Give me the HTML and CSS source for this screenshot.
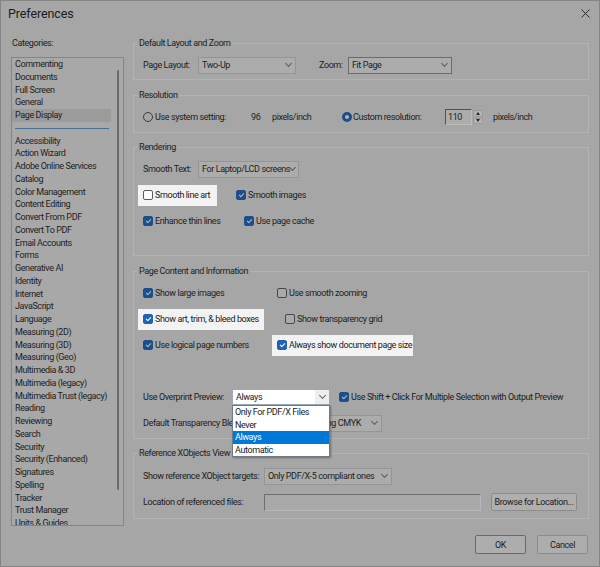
FILE: index.html
```html
<!DOCTYPE html>
<html>
<head>
<meta charset="utf-8">
<link rel="stylesheet" href="styles.css">
</head>
<body>
<div class="dialog">
  <div class="titlebar">
    <span class="title">Preferences</span>
    <svg class="close" viewBox="0 0 10 10"><path d="M0.5 0.5 L9.5 9.5 M9.5 0.5 L0.5 9.5" stroke="#202020" stroke-width="1" fill="none"/></svg>
  </div>
  <div class="main">
    <div class="side">
      <div class="cat-label">Categories:</div>
      <div class="list">
        <div class="list-items">
          <div class="item">Commenting</div>
          <div class="item">Documents</div>
          <div class="item">Full Screen</div>
          <div class="item">General</div>
          <div class="item sel">Page Display</div>
          <div class="sep"></div>
          <div class="item">Accessibility</div>
          <div class="item">Action Wizard</div>
          <div class="item">Adobe Online Services</div>
          <div class="item">Catalog</div>
          <div class="item">Color Management</div>
          <div class="item">Content Editing</div>
          <div class="item">Convert From PDF</div>
          <div class="item">Convert To PDF</div>
          <div class="item">Email Accounts</div>
          <div class="item">Forms</div>
          <div class="item">Generative AI</div>
          <div class="item">Identity</div>
          <div class="item">Internet</div>
          <div class="item">JavaScript</div>
          <div class="item">Language</div>
          <div class="item">Measuring (2D)</div>
          <div class="item">Measuring (3D)</div>
          <div class="item">Measuring (Geo)</div>
          <div class="item">Multimedia &amp; 3D</div>
          <div class="item">Multimedia (legacy)</div>
          <div class="item">Multimedia Trust (legacy)</div>
          <div class="item">Reading</div>
          <div class="item">Reviewing</div>
          <div class="item">Search</div>
          <div class="item">Security</div>
          <div class="item">Security (Enhanced)</div>
          <div class="item">Signatures</div>
          <div class="item">Spelling</div>
          <div class="item">Tracker</div>
          <div class="item">Trust Manager</div>
          <div class="item">Units &amp; Guides</div>
        </div>
        <div class="scrollbar"></div>
      </div>
    </div>

    <div class="content">
      <fieldset class="group g1">
        <legend>Default Layout and Zoom</legend>
        <div class="row">
          <span class="lbl w55">Page Layout:</span>
          <div class="select w98"><span>Two-Up</span><span class="chev"></span></div>
          <span class="lbl w29 ml23">Zoom:</span>
          <div class="select w104 focus"><span>Fit Page</span><span class="chev"></span></div>
        </div>
      </fieldset>

      <fieldset class="group g2">
        <legend>Resolution</legend>
        <div class="row">
          <span class="radio"></span>
          <span class="lbl w96 ml2">Use system setting:</span>
          <span class="lbl w21">96</span>
          <span class="lbl w70">pixels/inch</span>
          <span class="radio on"></span>
          <span class="lbl w92 ml1">Custom resolution:</span>
          <div class="numbox">110</div>
          <div class="spinner"><span class="up"></span><span class="down"></span></div>
          <span class="lbl ml10">pixels/inch</span>
        </div>
      </fieldset>

      <fieldset class="group g3">
        <legend>Rendering</legend>
        <div class="row">
          <span class="lbl w55">Smooth Text:</span>
          <div class="select w101"><span>For Laptop/LCD screens</span><span class="chev"></span></div>
        </div>
        <div class="row">
          <div class="hl w79"><span class="cb"></span><span>Smooth line art</span></div>
          <div class="opt ml19"><span class="cb on"></span><span>Smooth images</span></div>
        </div>
        <div class="row">
          <div class="opt w101"><span class="cb on"></span><span>Enhance thin lines</span></div>
          <div class="opt"><span class="cb on"></span><span>Use page cache</span></div>
        </div>
      </fieldset>

      <fieldset class="group g4">
        <legend>Page Content and Information</legend>
        <div class="row">
          <div class="opt w134"><span class="cb on"></span><span>Show large images</span></div>
          <div class="opt"><span class="cb"></span><span>Use smooth zooming</span></div>
        </div>
        <div class="row">
          <div class="hl w126"><span class="cb on"></span><span>Show art, trim, &amp; bleed boxes</span></div>
          <div class="opt ml21"><span class="cb"></span><span>Show transparency grid</span></div>
        </div>
        <div class="row">
          <div class="opt w129"><span class="cb on"></span><span>Use logical page numbers</span></div>
          <div class="hl hl-in w141"><span class="cb on"></span><span>Always show document page size</span></div>
        </div>
        <div class="row spacer"></div>
        <div class="row">
          <span class="lbl w89">Use Overprint Preview:</span>
          <div class="combo">
            <div class="select w98 light"><span>Always</span><span class="chevbox"><span class="chev"></span></span></div>
            <div class="dropdown">
              <div class="dd-item">Only For PDF/X Files</div>
              <div class="dd-item">Never</div>
              <div class="dd-item active">Always</div>
              <div class="dd-item">Automatic</div>
            </div>
          </div>
          <div class="opt ml9"><span class="cb on"></span><span>Use Shift + Click For Multiple Selection with Output Preview</span></div>
        </div>
        <div class="row">
          <span class="lbl w159">Default Transparency Blending Space:</span>
          <div class="select w80"><span>Working CMYK</span><span class="chev"></span></div>
        </div>
      </fieldset>

      <fieldset class="group g5">
        <legend>Reference XObjects View Mode</legend>
        <div class="row">
          <span class="lbl w121">Show reference XObject targets:</span>
          <div class="select w128"><span>Only PDF/X-5 compliant ones</span><span class="chev"></span></div>
        </div>
        <div class="row">
          <span class="lbl w121">Location of referenced files:</span>
          <div class="textbox"></div>
          <div class="btn browse">Browse for Location...</div>
        </div>
      </fieldset>
    </div>
  </div>
  <div class="footer">
    <div class="btn ok">OK</div>
    <div class="btn">Cancel</div>
  </div>
</div>
</body>
</html>
```

FILE: styles.css
```css
* { box-sizing: border-box; }
html, body { margin: 0; padding: 0; }
body {
  width: 600px;
  height: 567px;
  overflow: hidden;
  background: #a6a6a6;
  font-family: Roboto, "Liberation Sans", Arial, sans-serif;
  font-size: 9px;
  letter-spacing: -0.4px;
  color: #1d1d1d;
}
.dialog {
  width: 600px;
  height: 567px;
  border: 1px solid #858585;
  background: #a6a6a6;
  display: flex;
  flex-direction: column;
}
.titlebar {
  height: 24px;
  flex: 0 0 24px;
  display: flex;
  align-items: center;
  justify-content: space-between;
  padding: 0 9px 0 7px;
}
.title { font-size: 12.5px; letter-spacing: -0.1px; color: #1a1a1a; }
.close { width: 9px; height: 9px; }

.main {
  display: flex;
  gap: 9px;
  padding: 12px 10px 0 10px;
}
.side { width: 113px; flex: 0 0 113px; }
.cat-label { height: 12px; line-height: 12px; padding-left: 1px; }
.list {
  margin-top: 8px;
  height: 469px;
  border: 1px solid #858585;
  background: #a8a8a8;
  display: flex;
  overflow: hidden;
}
.list-items { width: 99px; flex: 0 0 99px; }
.item {
  height: 12.75px;
  line-height: 12.75px;
  padding-left: 3px;
  white-space: nowrap;
}
.item.sel { background: #9b9b9b; }
.sep {
  height: 12.75px;
  display: flex;
  align-items: center;
  padding: 0 2px 0 3px;
}
.sep::after { content: ""; flex: 1; height: 1px; background: #4a6f95; }
.scrollbar {
  width: 2px;
  height: 420px;
  margin: 12px 0 0 6px;
  background: #6a6a6a;
  border-radius: 1px;
}

.content { width: 456px; display: flex; flex-direction: column; }
.group {
  margin: 0;
  border: 1px solid #b3b3b3;
  padding: 3px 8px 1px 9px;
  min-width: 0;
}
.group legend {
  height: 12px;
  line-height: 12px;
  padding: 0 2px;
  margin-left: -6px;
}
.g2 { margin-top: 9px; padding-bottom: 2px; }
.g3 { margin-top: 8px; padding-bottom: 21px; }
.g4 { margin-top: 9px; padding-bottom: 2px; }
.g5 { margin-top: 8px; padding-top: 4px; padding-bottom: 3px; }

.row { display: flex; align-items: center; height: 26px; white-space: nowrap; }
.lbl { flex: 0 0 auto; }
.w21 { width: 21px; } .w29 { width: 29px; } .w55 { width: 55px; } .w70 { width: 70px; }
.w79 { width: 79px; } .w80 { width: 80px; } .w89 { width: 89px; } .w92 { width: 92px; }
.w96 { width: 96px; } .w98 { width: 98px; } .w101 { width: 101px; } .w104 { width: 104px; }
.w121 { width: 121px; } .w126 { width: 126px; } .w128 { width: 128px; } .w129 { width: 129px; }
.w134 { width: 134px; } .w141 { width: 141px; } .w159 { width: 159px; }
.ml1 { margin-left: 1px; } .ml2 { margin-left: 2px; } .ml9 { margin-left: 9px; } .ml10 { margin-left: 10px; }
.ml19 { margin-left: 19px; } .ml21 { margin-left: 21px; } .ml23 { margin-left: 23px; }

.select {
  flex: 0 0 auto;
  height: 17px;
  border: 1px solid #959595;
  background: #acacac;
  display: flex;
  align-items: center;
  justify-content: space-between;
  padding: 0 3px 0 3px;
  overflow: hidden;
}
.select.focus { border-color: #6c6c6c; }
.chev {
  width: 5px;
  height: 5px;
  border-right: 1px solid #5a5a5a;
  border-bottom: 1px solid #5a5a5a;
  transform: rotate(45deg);
  margin: -3px 1px 0 0;
  flex: 0 0 auto;
}
.select.light {
  background: #ffffff;
  border-color: #98aabb;
  height: 16px;
  padding-right: 0;
  color: #1a1a1a;
}
.chevbox {
  width: 14px;
  height: 14px;
  background: #eeeeee;
  display: flex;
  align-items: center;
  justify-content: center;
}
.chevbox .chev { border-color: #666; margin: -3px 0 0 0; }

.combo { position: relative; flex: 0 0 auto; }
.dropdown {
  position: absolute;
  top: 16px;
  left: 0;
  width: 98px;
  background: #ffffff;
  border: 1px solid #6f7a86;
  box-shadow: 1px 1px 2px rgba(0, 0, 0, 0.35);
  z-index: 2;
  color: #1a1a1a;
}
.dd-item {
  height: 12.6px;
  line-height: 12.6px;
  padding-left: 2px;
  white-space: nowrap;
}
.dd-item.active { background: #0078d7; color: #ffffff; }

.radio {
  flex: 0 0 auto;
  width: 10px;
  height: 10px;
  border-radius: 50%;
  border: 1px solid #3c3c3c;
}
.radio.on { border: 3px solid #1b4d86; background: #b4b4b4; }

.numbox {
  width: 27px;
  height: 16px;
  line-height: 14px;
  padding-left: 2px;
  background: #acacac;
  border-top: 1px solid #505050;
  border-left: 1px solid #505050;
  border-right: 1px solid #bcbcbc;
  border-bottom: 1px solid #bcbcbc;
}
.spinner {
  width: 10px;
  height: 14px;
  margin-left: 1px;
  display: flex;
  flex-direction: column;
  gap: 1px;
}
.spinner span {
  flex: 1;
  background: #b3b3b3;
  border: 1px solid #9a9a9a;
  display: flex;
  align-items: center;
  justify-content: center;
}
.spinner .up::after {
  content: "";
  border-left: 2.5px solid transparent;
  border-right: 2.5px solid transparent;
  border-bottom: 3px solid #2a2a2a;
}
.spinner .down::after {
  content: "";
  border-left: 2.5px solid transparent;
  border-right: 2.5px solid transparent;
  border-top: 3px solid #2a2a2a;
}

.opt { display: flex; align-items: center; gap: 2px; flex: 0 0 auto; }
.hl {
  display: flex;
  align-items: center;
  gap: 2px;
  height: 21px;
  margin-left: -5px;
  padding-left: 5px;
  background: #f3f3f3;
  color: #1a1a1a;
  flex: 0 0 auto;
}
.hl-in { margin-left: 0; }
.cb {
  position: relative;
  flex: 0 0 auto;
  width: 10px;
  height: 10px;
  border-radius: 2px;
  border: 1px solid #474747;
  background: #aaaaaa;
}
.cb.on { background: #1d4e87; border-color: #1d4e87; }
.cb.on::after {
  content: "";
  position: absolute;
  left: 3px;
  top: 1px;
  width: 2px;
  height: 4px;
  border-right: 1px solid #a8bbd0;
  border-bottom: 1px solid #a8bbd0;
  transform: rotate(45deg);
}
.hl .cb { background: #ffffff; border-color: #5c5c5c; }
.hl .cb.on { background: #1f64b4; border-color: #1f64b4; }
.hl .cb.on::after { border-color: #ffffff; }

.textbox {
  width: 217px;
  height: 17px;
  background: #a9a9a9;
  border-top: 1px solid #6e6e6e;
  border-left: 1px solid #6e6e6e;
  border-right: 1px solid #b8b8b8;
  border-bottom: 1px solid #b8b8b8;
}
.btn {
  height: 19px;
  width: 51px;
  border: 1px solid #8c8c8c;
  border-radius: 2px;
  background: #adadad;
  display: flex;
  align-items: center;
  justify-content: center;
  white-space: nowrap;
}
.browse { width: 86px; height: 18px; margin-left: 10px; background: #afafaf; }
.ok { border-color: #4d7196; }
.footer {
  display: flex;
  justify-content: flex-end;
  gap: 11px;
  padding: 9px 11px 0 0;
}
```
